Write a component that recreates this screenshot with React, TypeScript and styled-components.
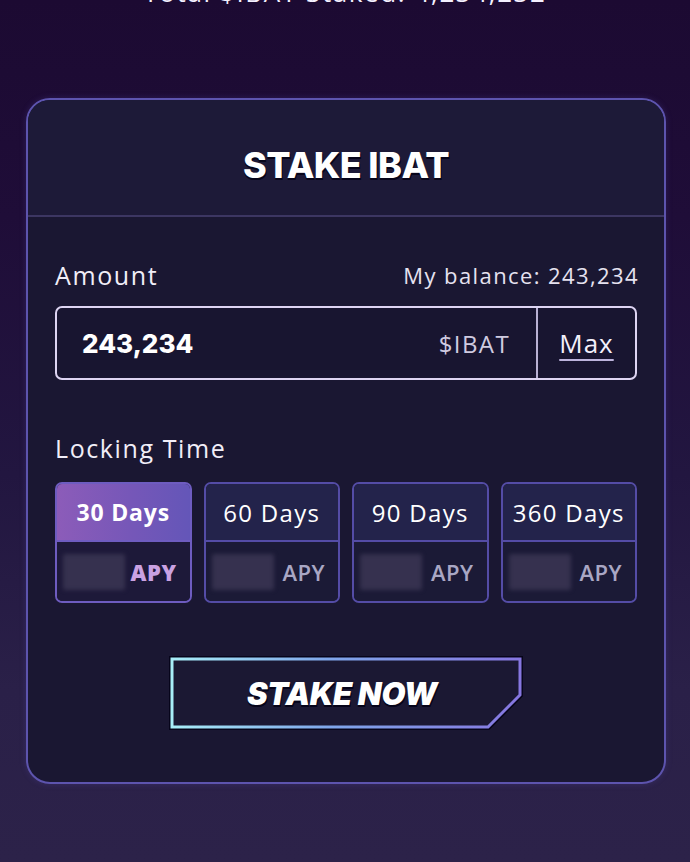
import React from "react";
import styled, { createGlobalStyle } from "styled-components";

const Global = createGlobalStyle`
  html, body { margin: 0; padding: 0; }
  body {
    width: 690px;
    height: 862px;
    overflow: hidden;
    background: linear-gradient(180deg, #1c0a32 0%, #1f0d38 25%, #221640 55%, #2a2048 80%, #2c2249 100%);
    font-family: "Open Sans", "Noto Sans", sans-serif;
    color: #fff;
  }
`;

const Page = styled.div`
  width: 690px;
  height: 862px;
  display: flex;
  flex-direction: column;
  align-items: center;
`;

const TopStat = styled.div`
  font-size: 26px;
  line-height: 26px;
  margin-top: -21px;
  color: #f4f0ff;
  letter-spacing: 1.6px;
`;

const Card = styled.section`
  margin-top: 93px;
  margin-left: 2px;
  width: 640px;
  box-sizing: border-box;
  border: 2px solid #5d54ae;
  border-radius: 24px;
  background: #1a1732;
  overflow: hidden;
  box-shadow: 0 0 6px rgba(90, 80, 180, 0.25);
`;

const Header = styled.header`
  height: 117px;
  box-sizing: border-box;
  padding-top: 14px;
  display: flex;
  align-items: center;
  justify-content: center;
  background: #1d1a38;
  border-bottom: 2px solid #3c3662;
`;

const Title = styled.h1`
  margin: 0;
  font-family: "Inter", sans-serif;
  font-weight: 800;
  font-size: 36px;
  letter-spacing: -0.6px;
  color: #fff;
  text-shadow: 0 2px 0 #07051a, 1px 2px 0 #07051a;
`;

const Body = styled.div`
  padding: 43px 27px 53px;
  display: flex;
  flex-direction: column;
`;

const LabelRow = styled.div`
  display: flex;
  justify-content: space-between;
  align-items: center;
  height: 30px;
`;

const Label = styled.span`
  font-size: 25px;
  color: #f1eef8;
  letter-spacing: 1.6px;
`;

const Balance = styled.span`
  font-size: 22px;
  color: #e6e2f0;
  letter-spacing: 1.4px;
  margin-right: -2px;
`;

const InputBox = styled.div`
  margin-top: 16px;
  height: 74px;
  box-sizing: border-box;
  border: 2px solid #ddd4f2;
  border-radius: 7px;
  display: flex;
  align-items: stretch;
  background: #181530;
`;

const AmountValue = styled.div`
  flex: 1;
  display: flex;
  align-items: center;
  padding-left: 25px;
  font-family: "Inter", sans-serif;
  font-size: 26px;
  font-weight: 800;
  color: #fff;
`;

const Unit = styled.div`
  display: flex;
  align-items: center;
  padding-right: 26px;
  font-size: 24px;
  letter-spacing: 1.4px;
  color: #cfcbe0;
`;

const MaxButton = styled.button`
  width: 99px;
  border: none;
  border-left: 2px solid #b9b1d4;
  background: transparent;
  color: #f3f0fb;
  font-family: "Open Sans", sans-serif;
  font-size: 26px;
  font-weight: 500;
  letter-spacing: 1px;
  text-decoration: underline;
  text-decoration-thickness: 2px;
  text-underline-offset: 6px;
  text-decoration-color: #bdb4dc;
  padding: 0;
`;

const LockLabel = styled(Label)`
  margin-top: 53px;
  height: 30px;
  line-height: 30px;
  display: block;
`;

const Options = styled.div`
  margin-top: 19px;
  display: grid;
  grid-template-columns: repeat(4, 1fr);
  gap: 12px;
`;

const Option = styled.div<{ $active?: boolean }>`
  height: 121px;
  box-sizing: border-box;
  border: 2px solid ${(p) => (p.$active ? "#6e5cc0" : "#544ca6")};
  border-radius: 7px;
  overflow: hidden;
  display: grid;
  grid-template-rows: 58px 1fr;
  background: #1b1a36;
`;

const OptionTop = styled.div<{ $active?: boolean }>`
  display: flex;
  align-items: center;
  justify-content: center;
  border-bottom: 2px solid ${(p) => (p.$active ? "#6e5cc0" : "#544ca6")};
  background: ${(p) =>
    p.$active ? "linear-gradient(90deg, #8c5cb9 0%, #7657b8 55%, #6456b8 100%)" : "#23234b"};
  font-size: ${(p) => (p.$active ? "23px" : "24px")};
  letter-spacing: ${(p) => (p.$active ? "0.8px" : "1.3px")};
  font-weight: ${(p) => (p.$active ? 700 : 400)};
  color: #fff;
`;

const OptionBottom = styled.div<{ $active?: boolean }>`
  display: flex;
  align-items: center;
  justify-content: space-between;
  padding: 0 13px 0 6px;
  background: ${(p) => (p.$active ? "#1d1939" : "#1b1a36")};
`;

const Blur = styled.div`
  width: 62px;
  height: 36px;
  background: #36314f;
  filter: blur(2px);
  border-radius: 2px;
`;

const Apy = styled.span<{ $active?: boolean }>`
  font-size: 22px;
  letter-spacing: 0.5px;
  font-weight: ${(p) => (p.$active ? 800 : 600)};
  color: ${(p) => (p.$active ? "#caa2e2" : "#a9a7c4")};
`;

const StakeButton = styled.button`
  margin: 54px auto 0;
  position: relative;
  width: 352px;
  height: 72px;
  border: none;
  background: transparent;
  padding: 0;
  cursor: pointer;
  display: flex;
  align-items: center;
  justify-content: center;
`;

const ButtonFrame = styled.svg`
  position: absolute;
  inset: 0;
  overflow: visible;
`;

const ButtonText = styled.span`
  position: relative;
  font-family: "Inter", sans-serif;
  font-style: italic;
  font-weight: 900;
  font-size: 31px;
  letter-spacing: -0.3px;
  color: #fff;
  text-shadow: 0 2px 0 #06041a, 1px 2px 0 #06041a;
  transform: translate(-4px, 0px);
`;

const options = [
  { label: "30 Days", active: true },
  { label: "60 Days" },
  { label: "90 Days" },
  { label: "360 Days" },
];

export default function App() {
  return (
    <>
      <Global />
      <Page>
        <TopStat>Total $IBAT Staked: 4,234,232</TopStat>
        <Card>
          <Header>
            <Title>STAKE IBAT</Title>
          </Header>
          <Body>
            <LabelRow>
              <Label>Amount</Label>
              <Balance>My balance: 243,234</Balance>
            </LabelRow>
            <InputBox>
              <AmountValue>243,234</AmountValue>
              <Unit>$IBAT</Unit>
              <MaxButton>Max</MaxButton>
            </InputBox>
            <LockLabel>Locking Time</LockLabel>
            <Options>
              {options.map((o) => (
                <Option key={o.label} $active={o.active}>
                  <OptionTop $active={o.active}>{o.label}</OptionTop>
                  <OptionBottom $active={o.active}>
                    <Blur />
                    <Apy $active={o.active}>APY</Apy>
                  </OptionBottom>
                </Option>
              ))}
            </Options>
            <StakeButton>
              <ButtonFrame viewBox="0 0 352 72" width="352" height="72">
                <defs>
                  <linearGradient id="stakeGrad" x1="0" y1="0" x2="1" y2="0">
                    <stop offset="0" stopColor="#a8eef8" />
                    <stop offset="0.45" stopColor="#7fa6ea" />
                    <stop offset="1" stopColor="#8676e0" />
                  </linearGradient>
                </defs>
                <path
                  d="M2 2 H350 V38 L318 70 H2 Z"
                  fill="#1b1833"
                  stroke="#06041a"
                  strokeWidth="6"
                  strokeLinejoin="miter"
                />
                <path
                  d="M2 2 H350 V38 L318 70 H2 Z"
                  fill="#1b1833"
                  stroke="url(#stakeGrad)"
                  strokeWidth="3"
                  strokeLinejoin="miter"
                />
              </ButtonFrame>
              <ButtonText>STAKE NOW</ButtonText>
            </StakeButton>
          </Body>
        </Card>
      </Page>
    </>
  );
}
